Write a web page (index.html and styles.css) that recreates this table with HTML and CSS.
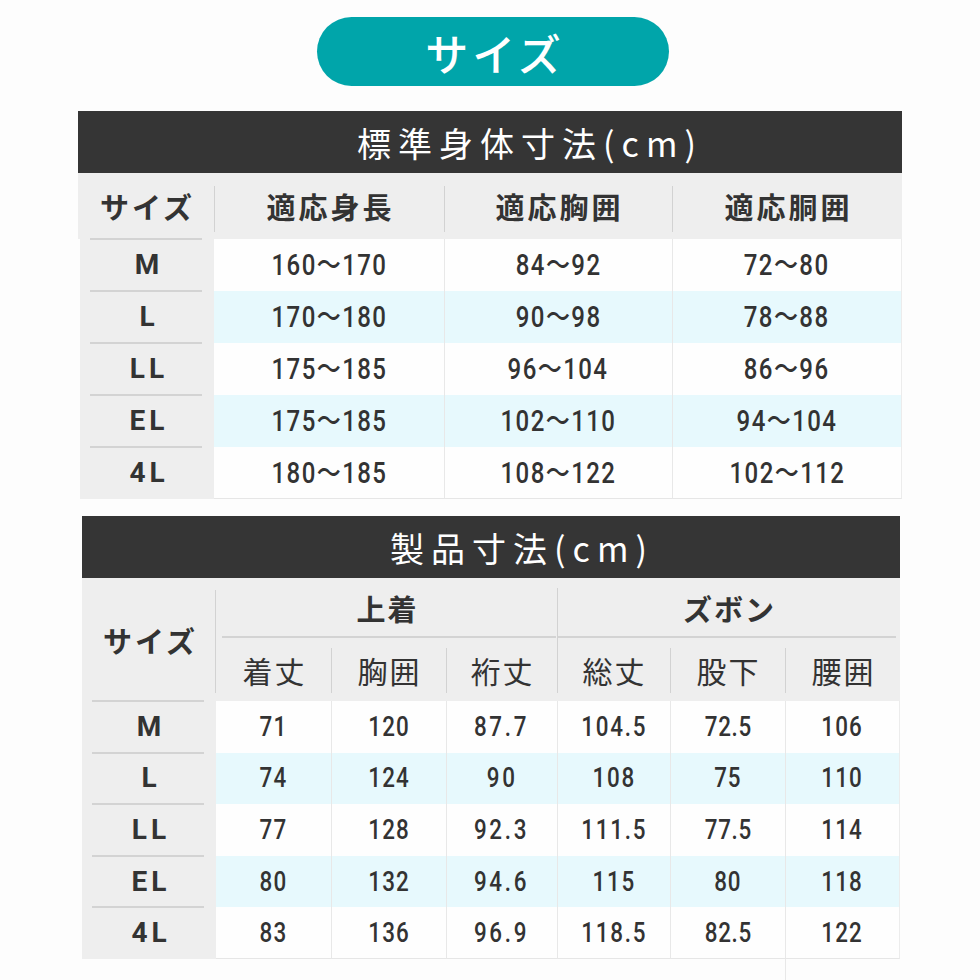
FILE: index.html
```html
<!DOCTYPE html>
<html lang="ja">
<head>
<meta charset="utf-8">
<title>サイズ</title>
<link rel="stylesheet" href="styles.css">
</head>
<body>
<div class="page">
  <div class="pill">サイズ</div>

  <section class="t1">
    <div class="band band1">標準身体寸法(cm)</div>
    <div class="g1 head1">
      <div class="hc">サイズ</div>
      <div class="hc sep">適応身長</div>
      <div class="hc sep">適応胸囲</div>
      <div class="hc sep">適応胴囲</div>
    </div>
    <div class="g1 row1"><div class="sz">M</div><div class="d first"><span class="n">160～170</span></div><div class="d"><span class="n">84～92</span></div><div class="d"><span class="n">72～80</span></div></div>
    <div class="g1 row1 alt"><div class="sz">L</div><div class="d first"><span class="n">170～180</span></div><div class="d"><span class="n">90～98</span></div><div class="d"><span class="n">78～88</span></div></div>
    <div class="g1 row1"><div class="sz">LL</div><div class="d first"><span class="n">175～185</span></div><div class="d"><span class="n">96～104</span></div><div class="d"><span class="n">86～96</span></div></div>
    <div class="g1 row1 alt"><div class="sz">EL</div><div class="d first"><span class="n">175～185</span></div><div class="d"><span class="n">102～110</span></div><div class="d"><span class="n">94～104</span></div></div>
    <div class="g1 row1 last"><div class="sz">4L</div><div class="d first"><span class="n">180～185</span></div><div class="d"><span class="n">108～122</span></div><div class="d"><span class="n">102～112</span></div></div>
  </section>

  <section class="t2">
    <div class="band band2">製品寸法(cm)</div>
    <div class="head2">
      <div class="h2size">サイズ</div>
      <div class="grp grp-a">上着</div>
      <div class="grp grp-b">ズボン</div>
      <div class="sub">着丈</div>
      <div class="sub sep">胸囲</div>
      <div class="sub sep">裄丈</div>
      <div class="sub sepfull">総丈</div>
      <div class="sub sep">股下</div>
      <div class="sub sep">腰囲</div>
    </div>
    <div class="g2 row2"><div class="sz">M</div><div class="d first"><span class="n">71</span></div><div class="d"><span class="n">120</span></div><div class="d wide"><span class="n">87.7</span></div><div class="d mid"><span class="n">104.5</span></div><div class="d tight"><span class="n">72.5</span></div><div class="d"><span class="n">106</span></div></div>
    <div class="g2 row2 alt"><div class="sz">L</div><div class="d first"><span class="n">74</span></div><div class="d"><span class="n">124</span></div><div class="d wide"><span class="n">90</span></div><div class="d mid"><span class="n">108</span></div><div class="d tight"><span class="n">75</span></div><div class="d"><span class="n">110</span></div></div>
    <div class="g2 row2"><div class="sz">LL</div><div class="d first"><span class="n">77</span></div><div class="d"><span class="n">128</span></div><div class="d wide"><span class="n">92.3</span></div><div class="d mid"><span class="n">111.5</span></div><div class="d tight"><span class="n">77.5</span></div><div class="d"><span class="n">114</span></div></div>
    <div class="g2 row2 alt"><div class="sz">EL</div><div class="d first"><span class="n">80</span></div><div class="d"><span class="n">132</span></div><div class="d wide"><span class="n">94.6</span></div><div class="d mid"><span class="n">115</span></div><div class="d tight"><span class="n">80</span></div><div class="d"><span class="n">118</span></div></div>
    <div class="g2 row2 last"><div class="sz">4L</div><div class="d first"><span class="n">83</span></div><div class="d"><span class="n">136</span></div><div class="d wide"><span class="n">96.9</span></div><div class="d mid"><span class="n">118.5</span></div><div class="d tight"><span class="n">82.5</span></div><div class="d"><span class="n">122</span></div></div>
  </section>
  <div class="tail"></div>
</div>
</body>
</html>
```
FILE: styles.css
```css
* { box-sizing: border-box; }

body {
  margin: 0;
  background: #fdfdfd;
  color: #333;
  font-family: "Noto Sans CJK JP", "Noto Sans", sans-serif;
}

.page {
  padding-top: 17px;
}

.pill {
  width: 352px;
  height: 69px;
  margin: 0 0 25px 317px;
  border-radius: 35px;
  background: #00a5aa;
  color: #fff;
  font-size: 43px;
  font-weight: 500;
  letter-spacing: 4px;
  padding-left: 4px;
  display: flex;
  align-items: center;
  justify-content: center;
}

.band {
  height: 62px;
  background: #353535;
  color: #fff;
  font-size: 34px;
  font-weight: 400;
  letter-spacing: 7px;
  display: flex;
  align-items: center;
  justify-content: center;
}

/* ---------- table 1 ---------- */
.t1 {
  margin-left: 78px;
  width: 824px;
}

.band1 { padding-left: 80px; }

.g1 {
  display: grid;
  grid-template-columns: 136px 230px 228px 230px;
}

.head1 {
  height: 66px;
  background: #eeeeee;
}

.hc {
  position: relative;
  display: flex;
  align-items: center;
  justify-content: center;
  font-size: 29px;
  font-weight: 700;
  letter-spacing: 3px;
  padding-left: 3px;
}

.hc.sep::before {
  content: "";
  position: absolute;
  left: 0;
  top: 13px;
  bottom: 7px;
  width: 1px;
  background: #d2d2d2;
}

.row1 { height: 52px; }

.sz {
  position: relative;
  background: #eeeeee;
  display: flex;
  align-items: center;
  justify-content: center;
  font-family: Roboto, "Noto Sans", sans-serif;
  font-weight: 700;
  font-size: 28px;
  line-height: 1;
  letter-spacing: 4px;
  padding-left: 4px;
}

.t1 .sz { margin-left: 2px; }

.sz::before {
  content: "";
  position: absolute;
  top: -1px;
  left: 10px;
  right: 12px;
  height: 2px;
  background: #d3d3d3;
}

.d {
  display: flex;
  align-items: center;
  justify-content: center;
  background: #fefefe;
  border-left: 1px solid #e8e8e8;
  font-family: Roboto, "Noto Sans CJK JP", sans-serif;
  font-weight: 500;
  font-size: 30px;
  line-height: 1;
  letter-spacing: 1.8px;
}

.n {
  display: inline-block;
  transform: scaleX(0.8);
  white-space: nowrap;
}

.d.first { border-left: 0; }
.d:last-child { border-right: 1px solid #ececec; }

.alt .d { background: #e7f9fd; }

.last .d { border-bottom: 1px solid #e6e6e6; }

/* ---------- table 2 ---------- */
.t2 {
  margin: 17px 0 0 82px;
  width: 818px;
}

.band2 { padding-left: 62px; }

.head2 {
  display: grid;
  grid-template-columns: 134px 115px 115px 111px 113px 115px 115px;
  grid-template-rows: 60px 63px;
  background: #eeeeee;
}

.h2size {
  grid-row: 1 / 3;
  grid-column: 1;
  position: relative;
  display: flex;
  align-items: center;
  justify-content: center;
  font-size: 29px;
  font-weight: 700;
  letter-spacing: 3px;
  padding-left: 3px;
}

.h2size::after {
  content: "";
  position: absolute;
  right: 0;
  top: 12px;
  bottom: 8px;
  width: 1px;
  background: #d2d2d2;
}

.grp {
  position: relative;
  display: flex;
  align-items: center;
  justify-content: center;
  font-size: 29px;
  font-weight: 700;
  letter-spacing: 2px;
  padding-left: 2px;
}

.grp-a { grid-column: 2 / 5; }
.grp-b { grid-column: 5 / 8; }

.grp::after {
  content: "";
  position: absolute;
  bottom: 0;
  height: 2px;
  background: #d3d3d3;
}

.grp-a::after { left: 6px; right: 1px; }
.grp-b::after { left: 1px; right: 4px; }

.grp-b::before {
  content: "";
  position: absolute;
  left: 0;
  top: 10px;
  bottom: 0;
  width: 1px;
  background: #d2d2d2;
}

.sub {
  position: relative;
  display: flex;
  align-items: center;
  justify-content: center;
  font-size: 30px;
  font-weight: 400;
  letter-spacing: 2px;
  padding-left: 2px;
}

.sub.sep::before,
.sub.sepfull::before {
  content: "";
  position: absolute;
  left: 0;
  top: 10px;
  bottom: 8px;
  width: 1px;
  background: #d2d2d2;
}

.sub.sepfull::before { top: 0; }

.g2 {
  display: grid;
  grid-template-columns: 134px 115px 115px 111px 113px 115px 115px;
}

.row2 { height: 51.6px; }

.row2 .sz::before { left: 10px; right: 12px; }

.row2 .d {
  font-size: 28px;
  letter-spacing: 1.5px;
}

.row2 .d.wide { letter-spacing: 3.4px; }
.row2 .d.mid { letter-spacing: 2.2px; }
.row2 .d.tight { letter-spacing: 0.8px; }

.tail {
  width: 1px;
  height: 22px;
  margin-left: 785px;
  background: #e8e8e8;
}
```
